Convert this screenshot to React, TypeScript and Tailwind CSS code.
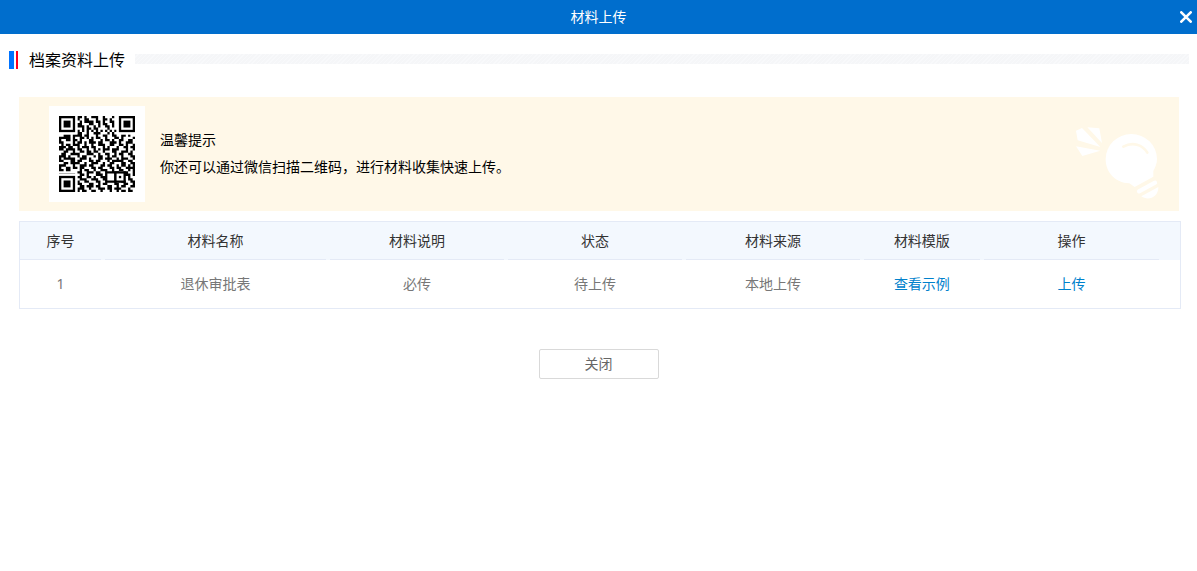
import type { ReactNode } from "react";

interface Material {
  id: number;
  name: string;
  note: string;
  status: string;
  source: string;
}

const columns = [
  { title: "序号", width: "w-[7.33%]" },
  { title: "材料名称", width: "w-[19.4%]" },
  { title: "材料说明", width: "w-[15.34%]" },
  { title: "状态", width: "w-[15.34%]" },
  { title: "材料来源", width: "w-[15.34%]" },
  { title: "材料模版", width: "w-[10.35%]" },
  { title: "操作", width: "w-[15.43%]" },
];

const materials: Material[] = [
  { id: 1, name: "退休审批表", note: "必传", status: "待上传", source: "本地上传" },
];

// one string per module row, # is a dark module
const qrRows = [
  "#######.##.#..###..#...#..#######",
  "#.....#.#..##...#..##.#...#.....#",
  "#.###.#..#.####.##.#..##..#.###.#",
  "#.###.#.##...##..#.##..#..#.###.#",
  "#.###.#.###.#..#.#..##.#..#.###.#",
  "#.....#...#.##.##....#....#.....#",
  "#######.#.#.#.#.#.#.#.#.#.#######",
  "........##..#..###...#.#.........",
  "..###.####.##...#..##..##..##.#..",
  "#####.#..##.#.#.##..#...##.#....#",
  "#..##.##.#...##...#.##.#..##..##.",
  "##....#.##.#.###.##...###.#..###.",
  ".#.##.###..#..#..###..##..##.#..#",
  "###.##..#.###.##...#.#...#..##.##",
  "##.####.##..#..#.#.###.###...#..#",
  "..##..#..##.##.##..#...##..###.#.",
  ".##..####...###..#..##..#.##..##.",
  "###.#...#.##...#.##..#.##..#...##",
  "#.#####..###.#...##.###..#.###..#",
  "##...##.##...##.##...#.#####..##.",
  "..##.####..#..###..#..##...##..##",
  "###...#..###.##...##.##..#.##.#.#",
  "#..##.##.##...##.##...##.##..####",
  "##.##....#.##..#..###..#..##..#.#",
  "........##..###.##..######..##..#",
  "#######..##.#...###.#...#...###.#",
  "#.....#.##..##.#..###...#.##..#..",
  "#.###.#..###..###..##...####..##.",
  "#.###.#.#..##...##..#####..##..##",
  "#.###.#.##...##..#.##...##..##..#",
  "#.....#..##.###.##...##..#.##..##",
  "#######.###..#...###.##.###...#..",
  "........#.##..##..#...#..#.##.##.",
];

const finderCorners = [
  [0, 0],
  [26, 0],
  [0, 26],
];

function QrCode() {
  return (
    <div className="size-24 shrink-0 bg-white p-[10px]">
      <svg viewBox="0 0 33 33" className="size-full" role="img" aria-label="微信二维码">
        <path
          fill="#000"
          d={qrRows
            .map((row, y) => [...row].map((c, x) => (c === "#" ? `M${x} ${y}h1v1h-1z` : "")).join(""))
            .join("")}
        />
        {finderCorners.map(([x, y]) => (
          <g key={`${x}-${y}`}>
            <rect x={x - 1} y={y - 1} width="9" height="9" fill="#fff" />
            <rect x={x} y={y} width="7" height="7" fill="#000" />
            <rect x={x + 1} y={y + 1} width="5" height="5" fill="#fff" />
            <rect x={x + 2} y={y + 2} width="3" height="3" fill="#000" />
          </g>
        ))}
        {/* alignment mark */}
        <rect x="24" y="24" width="5" height="5" fill="#000" />
        <rect x="25" y="25" width="3" height="3" fill="#fff" />
        <rect x="26" y="26" width="1" height="1" fill="#000" />
      </svg>
    </div>
  );
}

function BulbIcon() {
  return (
    <svg viewBox="48 36 252 216" className="mt-[18px] ml-auto h-[72px] w-[84px] shrink-0" fill="#fff" aria-hidden="true">
      <path d="M48 47 66 39 121 96 53 76z" />
      <path d="M82 37 118 40 126 84z" />
      <path d="M48 94 121 107 67 123z" />
      <path d="M214 57a77 75 0 0 1 77 75c0 15-6 26-11 36v17l-56 31-16-11c-44-2-71-34-71-73a77 75 0 0 1 77-75z" />
      <path d="M190 95c28-16 58-6 72 18" fill="none" stroke="#fff8e8" strokeWidth="8" strokeLinecap="round" />
      <path d="M237 229 285 203" stroke="#fff" strokeWidth="13" strokeLinecap="round" />
      <path d="M244 244 295 216c1 30-30 43-51 28z" />
    </svg>
  );
}

function Cell({ children }: { children?: ReactNode }) {
  return <td className="h-12 pr-1 text-center text-[#777]">{children}</td>;
}

export default function App() {
  return (
    <div
      lang="zh-CN"
      className="min-h-screen bg-white font-['Noto_Sans','Noto_Sans_CJK_SC',sans-serif] text-sm text-black"
    >
      <header className="relative flex h-[34px] items-center justify-center bg-[#006ecd] text-white">
        <h1>材料上传</h1>
        <button type="button" aria-label="关闭窗口" className="absolute right-1 cursor-pointer p-px">
          <svg viewBox="0 0 12 12" className="size-3" stroke="#fff" strokeWidth="2.6" strokeLinecap="round">
            <path d="M1.3 1.3 10.7 10.7M10.7 1.3 1.3 10.7" />
          </svg>
        </button>
      </header>

      <div className="flex h-[52px] items-center pr-2 pl-[9px]">
        <span className="h-[18px] w-[5px] bg-[#0073ff]" />
        <span className="ml-[2px] h-[18px] w-[2px] bg-[#ff0020]" />
        <h2 className="ml-[11px] text-base">档案资料上传</h2>
        <span className="mt-[-2px] ml-[10px] h-[10px] flex-1 bg-[repeating-linear-gradient(135deg,#f5f6f8_0_2px,#f8f9fb_2px_3px)]" />
      </div>

      <main className="pr-4 pl-[19px]">
        <section className="mt-[11px] mr-[2px] flex h-[114px] items-center bg-[#fff8e8] pr-[19px] pl-[30px]">
          <QrCode />
          <div className="ml-[15px] pb-[2px] leading-[27px]">
            <p>温馨提示</p>
            <p>你还可以通过微信扫描二维码，进行材料收集快速上传。</p>
          </div>
          <BulbIcon />
        </section>

        <div className="mt-[10px] border border-[#e4eaf6]">
          <table className="w-full table-fixed border-collapse">
            <thead className="bg-[#f3f8fe] text-[#333]">
              <tr>
                {columns.map((col) => (
                  <th key={col.title} scope="col" className={`${col.width} p-0 pr-1 font-normal`}>
                    <div className="h-[38px] border-b border-[#e4eaf6] leading-[38px]">{col.title}</div>
                  </th>
                ))}
                <td />
              </tr>
            </thead>
            <tbody>
              {materials.map((item) => (
                <tr key={item.id}>
                  <Cell>{item.id}</Cell>
                  <Cell>{item.name}</Cell>
                  <Cell>{item.note}</Cell>
                  <Cell>{item.status}</Cell>
                  <Cell>{item.source}</Cell>
                  <Cell>
                    <a href="#example" className="text-[#0081cc]">查看示例</a>
                  </Cell>
                  <Cell>
                    <a href="#upload" className="text-[#0081cc]">上传</a>
                  </Cell>
                  <td />
                </tr>
              ))}
            </tbody>
          </table>
        </div>
      </main>

      <div className="mt-10 flex justify-center">
        <button type="button" className="h-[30px] w-[120px] cursor-pointer rounded-[2px] border border-[#d9d9d9] text-[#666]">
          关闭
        </button>
      </div>
    </div>
  );
}
